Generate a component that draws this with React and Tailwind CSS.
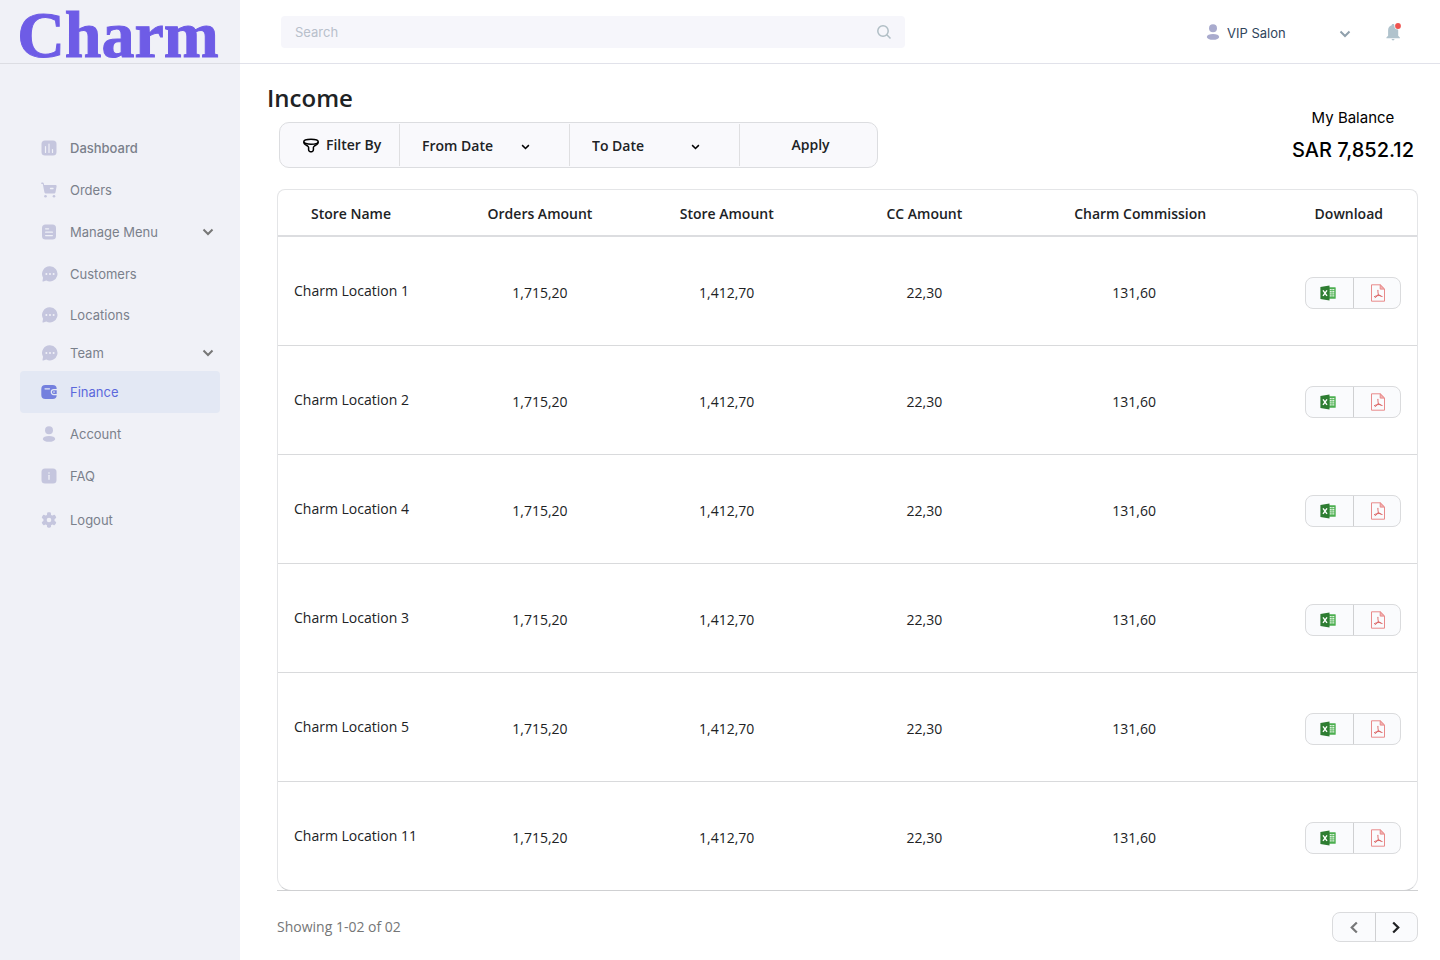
import React from "react";

function Chevron({ className }) {
  return (
    <svg viewBox="0 0 12 8" fill="none" stroke="currentColor" strokeWidth="2" aria-hidden="true" className={className}>
      <path d="M1.500 1.500 6 6l4.500-4.500" />
    </svg>
  );
}

function ChartIcon() {
  return (
    <svg viewBox="0 0 16 16" className="size-4" aria-hidden="true">
      <rect x="0.500" y="0.500" width="15" height="15" rx="3.500" fill="currentColor" />
      <path d="M4.500 6.500v6M8 4v8.500M11.500 9.500v3" stroke="#f0f1f7" strokeWidth="1.200" strokeLinecap="round" />
    </svg>
  );
}

function CartIcon() {
  return (
    <svg viewBox="0 0 16 16" className="size-4" aria-hidden="true">
      <path d="M.8.600h.9c.6 0 1 .3 1.100.9l.3 1.500h11.400c.8 0 1.300.7 1.100 1.500l-1.100 5.700c-.2.900-.8 1.400-1.600 1.400H5.200c-.9 0-1.600-.6-1.800-1.400L1.800 1.900H.8a.6.600 0 0 1 0-1.300z" fill="currentColor" />
      <circle cx="4.500" cy="14.200" r="1.300" fill="currentColor" />
      <circle cx="13" cy="14.200" r="1.300" fill="currentColor" />
      <path d="M9.500 6.500h2.500" stroke="#f0f1f7" strokeWidth="1.300" strokeLinecap="round" />
    </svg>
  );
}

function MenuIcon() {
  return (
    <svg viewBox="0 0 16 16" className="size-4" aria-hidden="true">
      <rect x="1" y="0.500" width="14" height="15" rx="3.500" fill="currentColor" />
      <path d="M4.600 4.800h3M4.600 8.200h6.800M4.600 11.600h6.800" stroke="#f0f1f7" strokeWidth="1.200" strokeLinecap="round" />
    </svg>
  );
}

function ChatIcon() {
  return (
    <svg viewBox="0 0 16 16" className="ml-px size-4" aria-hidden="true">
      <path d="M8 .3a7.600 7.600 0 1 1-3.700 14.300l-3 .8c-.6.100-.9-.2-.8-.7l.6-3A7.600 7.600 0 0 1 8 .3z" fill="currentColor" />
      <circle cx="4.400" cy="8" r="1" fill="#f0f1f7" />
      <circle cx="8" cy="8" r="1" fill="#f0f1f7" />
      <circle cx="11.600" cy="8" r="1" fill="#f0f1f7" />
    </svg>
  );
}

function WalletIcon() {
  return (
    <svg viewBox="0 0 16 16" className="size-4" aria-hidden="true">
      <rect x="0.300" y="1" width="15.400" height="14" rx="4" fill="currentColor" />
      <path d="M4 4.800h4.500" stroke="#e3e8f4" strokeWidth="1.200" strokeLinecap="round" />
      <path d="M16 5.600h-3.200a2.500 2.500 0 0 0 0 5H16" fill="none" stroke="#e3e8f4" strokeWidth="1.200" />
      <circle cx="13" cy="8.100" r="0.800" fill="#e3e8f4" />
    </svg>
  );
}

function PersonIcon({ className }) {
  return (
    <svg viewBox="0 0 16 16" className={className} aria-hidden="true">
      <circle cx="8" cy="4.200" r="4" fill="currentColor" />
      <ellipse cx="8" cy="12.900" rx="6.200" ry="2.900" fill="currentColor" />
    </svg>
  );
}

function InfoIcon() {
  return (
    <svg viewBox="0 0 16 16" className="size-4" aria-hidden="true">
      <rect x="0.500" y="0.500" width="15" height="15" rx="3.500" fill="currentColor" />
      <path d="M8 7.300v4" stroke="#f0f1f7" strokeWidth="1.300" strokeLinecap="round" />
      <circle cx="8" cy="5" r="0.800" fill="#f0f1f7" />
    </svg>
  );
}

function GearIcon() {
  return (
    <svg viewBox="0 0 16 16" className="size-4" aria-hidden="true">
      <g fill="currentColor">
        <circle cx="8" cy="8" r="5.600" />
        <rect x="6" y="0.300" width="4" height="15.400" rx="1.400" />
        <rect x="6" y="0.300" width="4" height="15.400" rx="1.400" transform="rotate(60 8 8)" />
        <rect x="6" y="0.300" width="4" height="15.400" rx="1.400" transform="rotate(120 8 8)" />
      </g>
      <circle cx="8" cy="8" r="2.300" fill="#f0f1f7" />
    </svg>
  );
}

const navItems = [
  { label: "Dashboard", icon: <ChartIcon />, size: "h-[42px]", tone: "font-medium" },
  { label: "Orders", icon: <CartIcon />, size: "h-[42px]" },
  { label: "Manage Menu", icon: <MenuIcon />, size: "h-[42px]", expandable: true },
  { label: "Customers", icon: <ChatIcon />, size: "h-[42px]" },
  { label: "Locations", icon: <ChatIcon />, size: "h-10" },
  { label: "Team", icon: <ChatIcon />, size: "h-9", expandable: true },
  { label: "Finance", icon: <WalletIcon />, size: "h-[42px]", active: true },
  { label: "Account", icon: <PersonIcon className="size-4" />, size: "h-[42px]" },
  { label: "FAQ", icon: <InfoIcon />, size: "h-[42px]" },
  { label: "Logout", icon: <GearIcon />, size: "h-[46px]" },
];

function Sidebar() {
  return (
    <aside className="w-60 shrink-0 bg-[#f0f1f7] font-['Inter',sans-serif]">
      <div className="flex h-16 justify-center border-b border-[#dcdde3] pr-1">
        <a
          href="#home"
          className="font-['Liberation_Serif',serif] text-[66px] leading-[70px] font-bold text-[#6e5ce6] [-webkit-text-stroke:1px_#6e5ce6]"
        >
          Charm
        </a>
      </div>
      <nav aria-label="Main" className="flex flex-col px-5 pt-[63px]">
        {navItems.map((item) => (
          <a
            key={item.label}
            href={"#" + item.label.toLowerCase().replace(" ", "-")}
            aria-current={item.active ? "page" : undefined}
            className={
              "flex items-center rounded pr-1.5 pl-[21px] text-[13px] " +
              item.size + " " + (item.tone || "") + " " +
              (item.active ? "bg-[#e3e8f4] text-[#5c68dc]" : "text-[#7a808b]")
            }
          >
            <span className={"w-[29px] " + (item.active ? "text-[#7480de]" : "text-[#c5c6de]")}>{item.icon}</span>
            <span className="flex-1 pt-px">{item.label}</span>
            {item.expandable && <Chevron className="h-2 w-3 text-[#777777]" />}
          </a>
        ))}
      </nav>
    </aside>
  );
}

function TopBar() {
  return (
    <header className="flex h-16 items-center justify-between border-b border-[#e1e2ea] pr-[37px] pl-[41px] font-['Inter',sans-serif]">
      <label className="flex h-8 w-full max-w-[624px] items-center rounded bg-[#f6f6fb] pr-[13px] pl-3.5">
        <input
          type="search"
          aria-label="Search"
          placeholder="Search"
          className="min-w-0 flex-1 bg-transparent pt-0.5 text-[13px] outline-none placeholder:text-[#b8c0cb]"
        />
        <svg viewBox="0 0 16 16" fill="none" stroke="#b0bec5" strokeWidth="1.500" className="size-4" aria-hidden="true">
          <circle cx="7" cy="7" r="5.200" />
          <path d="m10.800 10.800 3.700 3.700" />
        </svg>
      </label>
      <div className="flex items-center">
        <PersonIcon className="size-4 text-[#a9abce]" />
        <div className="relative">
          <select aria-label="Salon" className="w-[130px] appearance-none bg-transparent pl-1.5 text-[13px] text-[#2f455c]">
            <option>VIP Salon</option>
          </select>
          <Chevron className="pointer-events-none absolute top-2.5 right-0 h-2 w-3 text-[#90a0ac]" />
        </div>
        <button type="button" aria-label="Notifications" className="ml-[34px]">
          <svg viewBox="0 0 18 20" className="h-5 w-[18px]" aria-hidden="true">
            <path d="M8 2c.9 0 1.400.5 1.400 1.200 2.400.6 3.800 2.600 3.800 5.100v5.400l1.700 1.700v.9H1.400v-.9l1.700-1.700V8.300c0-2.500 1.300-4.500 3.600-5.100C6.700 2.500 7.200 2 8 2zM6.600 17h2.900a1.450 1.450 0 0 1-2.900 0z" fill="#b0c3cd" />
            <circle cx="13" cy="4" r="3.600" fill="#fff" />
            <circle cx="13" cy="4" r="2.900" fill="#ef5350" />
          </svg>
        </button>
      </div>
    </header>
  );
}

function DateSelect({ label }) {
  return (
    <div className="relative flex w-[170px] border-l border-[#dfdfe1]">
      <select aria-label={label} className="w-full appearance-none bg-transparent pt-0.5 pl-[22px] text-sm font-semibold">
        <option>{label}</option>
      </select>
      <Chevron className="pointer-events-none absolute top-5 right-[39px] h-1.5 w-[9px] text-black" />
    </div>
  );
}

function FilterBar() {
  return (
    <form className="mt-2 ml-3 flex h-[46px] w-[599px] rounded-[10px] border border-[#dcdde0] bg-[#f9f9fc] py-px text-sm font-semibold">
      <div className="flex w-[119px] items-center gap-[7px] pl-[23px]">
        <svg viewBox="0 0 16 15" fill="none" stroke="#000" strokeWidth="1.500" strokeLinejoin="round" className="h-[15px] w-4" aria-hidden="true">
          <ellipse cx="8" cy="3.700" rx="7.200" ry="2.500" />
          <path d="M.8 3.700c0 1.500.6 2.300 1.600 3l2.200 1.300c.7.500 1 .9 1 1.600v2.200c0 .8.300 1.200.9 1.600.9.500 2.100.5 3 0 .6-.4.900-.8.900-1.600V9.600c0-.7.3-1.100 1-1.600l2.200-1.300c1-.7 1.600-1.500 1.600-3" />
        </svg>
        <span>Filter By</span>
      </div>
      <DateSelect label="From Date" />
      <DateSelect label="To Date" />
      <button type="submit" className="flex-1 border-l border-[#dfdfe1] pl-1 font-semibold">
        Apply
      </button>
    </form>
  );
}

function ExcelIcon() {
  return (
    <svg viewBox="0 0 16 16" className="size-4" aria-hidden="true">
      <rect x="8" y="2.200" width="7.700" height="11.600" rx="0.500" fill="#4caf50" />
      <path d="M9.500 4h2.200v1.300H9.500zM12.300 4h2v1.300h-2zM9.500 6.100h2.200v1.300H9.500zM12.300 6.100h2v1.300h-2zM9.500 8.200h2.200v1.300H9.500zM12.300 8.200h2v1.300h-2zM9.500 10.300h2.200v1.300H9.500zM12.300 10.300h2v1.300h-2z" fill="#dff1df" />
      <path d="M9.500.5v15L.4 13.900V2.100z" fill="#2e7d32" />
      <path d="m3 5.300 4 5.500M7 5.300l-4 5.500" stroke="#fff" strokeWidth="1.400" />
    </svg>
  );
}

function PdfIcon() {
  return (
    <svg viewBox="0 0 16 18" fill="none" stroke="#e88a8a" strokeWidth="1" className="h-[18px] w-4" aria-hidden="true">
      <path d="M1.500.8h8.700l4.300 4.300v12.100h-13z" />
      <path d="M10.200.8v4.300h4.300z" fill="#f3b4b4" />
      <path d="M7.900 6.300c0 1.900.1 2.800.5 3.700.6 1.200 1.700 2.200 3.700 2.500M8.200 10.400c-.6 1.300-1.400 2.200-3 3.100M4.400 12.600c1.500-.8 3.900-1.300 6-1" strokeWidth="1" stroke="#dc6464" strokeLinecap="round" />
    </svg>
  );
}

const rows = [1, 2, 4, 3, 5, 11].map((id) => ({
  name: "Charm Location " + id,
  orders: "1,715,20",
  store: "1,412,70",
  cc: "22,30",
  commission: "131,60",
}));

function IncomeTable() {
  return (
    <div className="mt-[21px] border-b border-[#cfd0d2]">
      <div className="-mb-px rounded-t-lg rounded-b-[14px] border border-[#e4e5e7] border-b-[#cfd0d2]">
        <table className="w-full table-fixed text-center text-sm">
          <thead>
            <tr className="h-[46px] border-b-2 border-[#dcdde0]">
              <th scope="col" className="w-[14.8%] pt-0.5 pl-[33px] text-left font-semibold">Store Name</th>
              <th scope="col" className="w-[16.4%] pt-0.5 font-semibold">Orders Amount</th>
              <th scope="col" className="w-[16.4%] pt-0.5 font-semibold">Store Amount</th>
              <th scope="col" className="w-[18.3%] pt-0.5 font-semibold">CC Amount</th>
              <th scope="col" className="w-[19.6%] pt-0.5 font-semibold">Charm Commission</th>
              <th scope="col" className="w-[14.5%] pt-0.5 pr-[34px] text-right font-semibold">Download</th>
            </tr>
          </thead>
          <tbody className="font-medium">
            {rows.map((row) => (
              <tr key={row.name} className="h-[109px] border-b border-[#d9dadc] last:border-b-0">
                <td className="pt-px pl-4 text-left">{row.name}</td>
                <td className="pt-1">{row.orders}</td>
                <td className="pt-1">{row.store}</td>
                <td className="pt-1">{row.cc}</td>
                <td className="pt-1 pr-3">{row.commission}</td>
                <td className="pt-1 pr-4">
                  <div className="ml-auto flex h-8 w-24 divide-x divide-[#cfd0d2] rounded-lg border border-[#dadbdd] bg-[#fafbfd]">
                    <button type="button" aria-label={"Download Excel for " + row.name} className="flex flex-1 items-center justify-center pr-0.5">
                      <ExcelIcon />
                    </button>
                    <button type="button" aria-label={"Download PDF for " + row.name} className="flex flex-1 items-center justify-center pl-0.5">
                      <PdfIcon />
                    </button>
                  </div>
                </td>
              </tr>
            ))}
          </tbody>
        </table>
      </div>
    </div>
  );
}

function Pagination() {
  return (
    <footer className="mt-[21px] flex items-center justify-between text-sm font-medium text-[#757677]">
      <p>Showing 1-02 of 02</p>
      <div className="flex h-[30px] w-[86px] divide-x divide-[#cfd0d2] rounded-lg border border-[#dadbdd] bg-[#fafbfd]">
        <button type="button" aria-label="Previous page" className="flex flex-1 items-center justify-center text-[#777879]">
          <Chevron className="h-[9px] w-3.5 rotate-90" />
        </button>
        <button type="button" aria-label="Next page" className="flex flex-1 items-center justify-center text-[#202224]">
          <Chevron className="h-[9px] w-3.5 -rotate-90" />
        </button>
      </div>
    </footer>
  );
}

export default function App() {
  return (
    <div className="flex min-h-screen bg-white font-['Open_Sans',sans-serif] text-[#202224]">
      <Sidebar />
      <div className="min-w-0 flex-1">
        <TopBar />
        <main className="pt-[18px] pr-[22px] pb-[18px] pl-[37px]">
          <div className="-ml-2.5 flex justify-between">
            <div>
              <h1 className="text-2xl leading-8 font-semibold">Income</h1>
              <FilterBar />
            </div>
            <div className="flex flex-col items-center pt-6 pr-1 font-['Inter',sans-serif] text-black">
              <p className="text-[15px] leading-6">My Balance</p>
              <p className="mt-1 text-xl leading-8 font-medium">SAR 7,852.12</p>
            </div>
          </div>
          <IncomeTable />
          <Pagination />
        </main>
      </div>
    </div>
  );
}
